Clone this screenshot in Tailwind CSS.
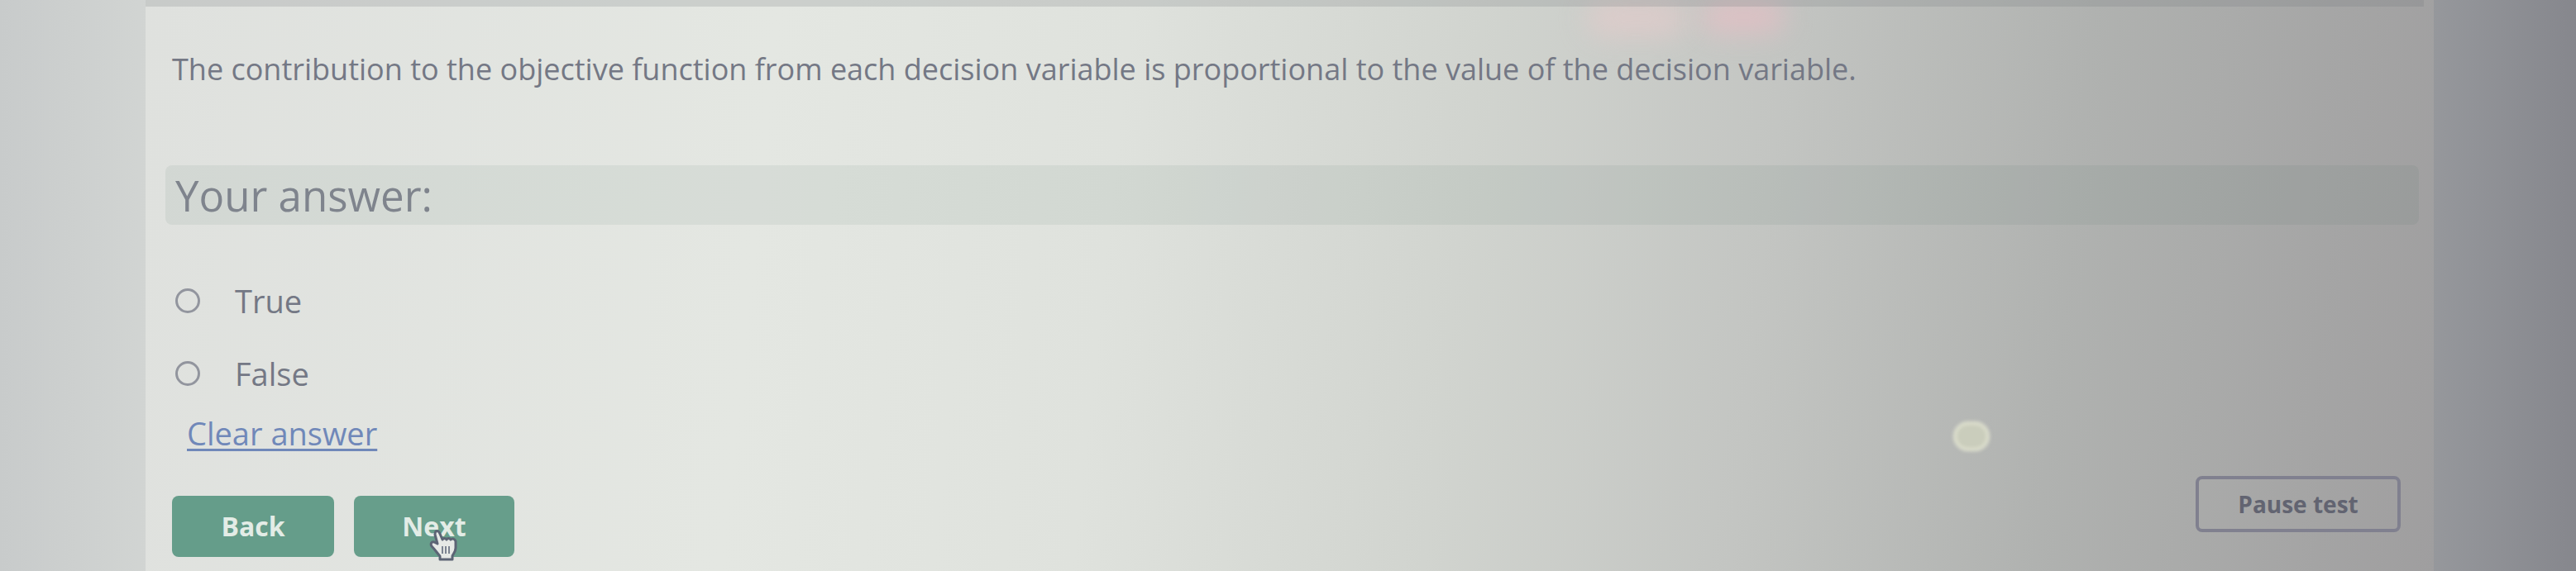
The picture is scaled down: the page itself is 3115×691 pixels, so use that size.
<!DOCTYPE html>
<html lang="en">

<head>
    <meta charset="UTF-8" />
    <meta name="viewport" content="width=device-width, initial-scale=1.0" />
    <title>Test question</title>
    <!-- Tailwind CSS -->
    <script src="https://cdn.jsdelivr.net/npm/@tailwindcss/browser@4"></script>
</head>

<body class="min-h-screen overflow-x-hidden bg-[linear-gradient(90deg,#c8cbcb_0%,#d2d5d3_6%,#d2d5d3_40%,#97999d_94%,#86878d_100%)] font-['Open_Sans',sans-serif] text-[38px] leading-[48px] text-[#747885]">

    <!-- Question card -->
    <main class="relative ml-[176px] mr-[172px] min-h-screen bg-[linear-gradient(96deg,#dfe1de_0%,#e4e7e2_27%,#dfe2dd_42%,#d1d4cf_57%,#c3c5c2_70%,#b0b2b0_83%,#9f9e9f_100%)]">

        <!-- Light spots -->
        <div class="absolute left-[63%] top-0 h-[44px] w-[120px] rounded-full bg-[#e8cccc]/60 blur-lg"></div>
        <div class="absolute left-[68%] top-0 h-[40px] w-[100px] rounded-full bg-[#eebcc4]/60 blur-lg"></div>
        <div class="absolute left-[79%] top-[510px] h-[36px] w-[44px] rounded-full border-4 border-[#dfe1cf] bg-[#cacdbc] blur-[2px]"></div>

        <div class="relative mr-3 h-2 bg-[#6c7276]/20"></div>

        <form class="relative flex flex-col pt-[52px]">
            <p class="px-8 text-[36px]">The contribution to the objective function from each decision variable is proportional to the value of the decision variable.</p>

            <h2 class="ml-6 mr-[18px] mt-[92px] rounded-lg bg-[#46605f]/8 px-3 py-1 text-[51px] leading-[64px] text-[#7f848d]">Your answer:</h2>

            <div class="mt-[68px] flex items-center gap-[42px] px-9">
                <input type="radio" id="answerTrue" name="answer" class="size-[30px] appearance-none rounded-full border-3 border-[#92959e] checked:bg-[#92959e]">
                <label for="answerTrue">True</label>
            </div>
            <div class="mt-10 flex items-center gap-[42px] px-9">
                <input type="radio" id="answerFalse" name="answer" class="size-[30px] appearance-none rounded-full border-3 border-[#92959e] checked:bg-[#92959e]">
                <label for="answerFalse">False</label>
            </div>

            <a href="#" class="mt-6 ml-[50px] self-start text-[#7088b9] underline decoration-3 underline-offset-4">Clear answer</a>

            <div class="mt-7 flex items-start justify-between pl-8 pr-10">
                <div class="mt-6 flex gap-6 text-[32px] font-bold text-[#e3ece6]">
                    <button type="button" class="h-[74px] w-[196px] rounded-lg bg-[#659d8a]">Back</button>
                    <button type="button" class="relative h-[74px] w-[194px] rounded-lg bg-[#679e8b]">
                        Next
                        <!-- Hand cursor -->
                        <svg class="absolute left-[90px] top-[40px] h-[40px] w-[36px]" viewBox="0 0 36 40" aria-hidden="true">
                            <path d="M9 3c2-1 4 0 5 3l3 7c1-2 4-2 5 0 1-2 4-2 5 0 2-2 5-1 6 2v8c0 5-3 7-4 10v4H14v-4c-3-3-5-7-10-12-2-3 0-6 3-5l4 2L8 7c0-2 0-3 1-4z" fill="#e6e9e6" stroke="#5c6475" stroke-width="3" stroke-linejoin="round" />
                            <path d="M17 21v9M21 21v9M25 21v9" stroke="#7c8491" stroke-width="2" />
                        </svg>
                    </button>
                </div>
                <button type="button" class="h-[68px] w-[248px] rounded-lg border-4 border-[#80808f] text-[28px] font-bold text-[#626471]">Pause test</button>
            </div>
        </form>
    </main>

</body>

</html>
